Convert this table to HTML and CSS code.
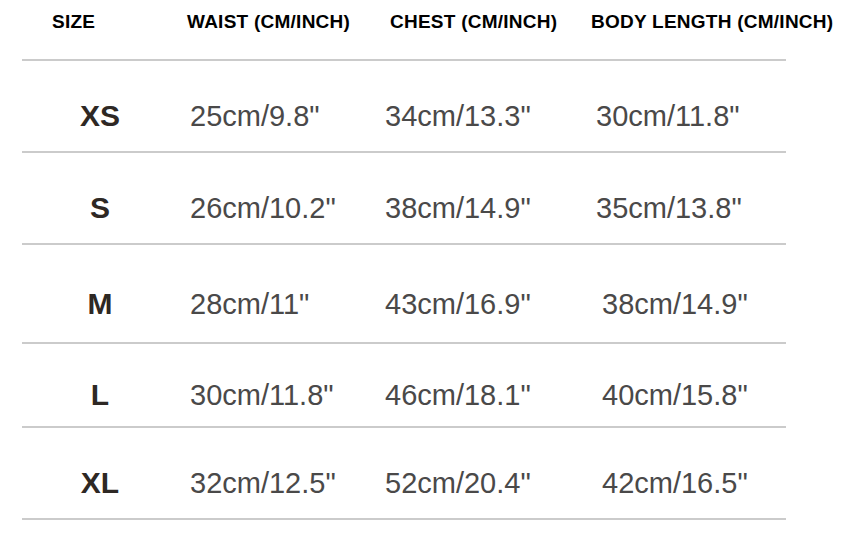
FILE: index.html
```html
<!DOCTYPE html>
<html lang="en">
<head>
<meta charset="utf-8">
<title>Size Chart</title>
<link rel="stylesheet" href="styles.css">
</head>
<body>
<div class="chart">
  <div class="head">
    <div class="hcell">SIZE</div>
    <div class="hcell">WAIST (CM/INCH)</div>
    <div class="hcell">CHEST (CM/INCH)</div>
    <div class="hcell">BODY LENGTH (CM/INCH)</div>
  </div>
  <div class="table">
    <div class="row row-a">
      <div class="size">XS</div>
      <div class="val">25cm/9.8"</div>
      <div class="val">34cm/13.3"</div>
      <div class="val">30cm/11.8"</div>
    </div>
    <div class="row row-a">
      <div class="size">S</div>
      <div class="val">26cm/10.2"</div>
      <div class="val">38cm/14.9"</div>
      <div class="val">35cm/13.8"</div>
    </div>
    <div class="row row-b">
      <div class="size">M</div>
      <div class="val">28cm/11"</div>
      <div class="val">43cm/16.9"</div>
      <div class="val val-shift">38cm/14.9"</div>
    </div>
    <div class="row row-c">
      <div class="size">L</div>
      <div class="val">30cm/11.8"</div>
      <div class="val">46cm/18.1"</div>
      <div class="val val-shift">40cm/15.8"</div>
    </div>
    <div class="row row-d">
      <div class="size">XL</div>
      <div class="val">32cm/12.5"</div>
      <div class="val">52cm/20.4"</div>
      <div class="val val-shift">42cm/16.5"</div>
    </div>
  </div>
</div>
</body>
</html>
```
FILE: styles.css
```css
html, body {
  margin: 0;
  padding: 0;
  background: #ffffff;
}

.chart {
  width: 856px;
  height: 534px;
  font-family: "Liberation Sans", Arial, sans-serif;
}

.head {
  display: grid;
  grid-template-columns: 135px 203px 201px auto;
  padding: 11px 0 0 52px;
  height: 59px;
  box-sizing: border-box;
}

.hcell {
  font-size: 19px;
  line-height: 22px;
  font-weight: bold;
  letter-spacing: 0.25px;
  color: #000000;
  white-space: nowrap;
}

.table {
  margin-left: 22px;
  width: 764px;
}

.row {
  display: grid;
  grid-template-columns: 156px 195px 211px 1fr;
  align-items: center;
  box-sizing: border-box;
  border-top: 2px solid #cbcbcb;
  padding-top: 20px;
}

.row:last-child {
  border-bottom: 2px solid #cbcbcb;
}

.row-a { height: 92px; }
.row-b { height: 99px; }
.row-c { height: 84px; }
.row-d { height: 94px; }

.size {
  text-align: center;
  font-size: 30px;
  line-height: 30px;
  font-weight: bold;
  color: #2e2824;
}

.val {
  padding-left: 12px;
  font-size: 29px;
  line-height: 30px;
  color: #4a4949;
  white-space: nowrap;
}

.val-shift {
  padding-left: 18px;
}
```
